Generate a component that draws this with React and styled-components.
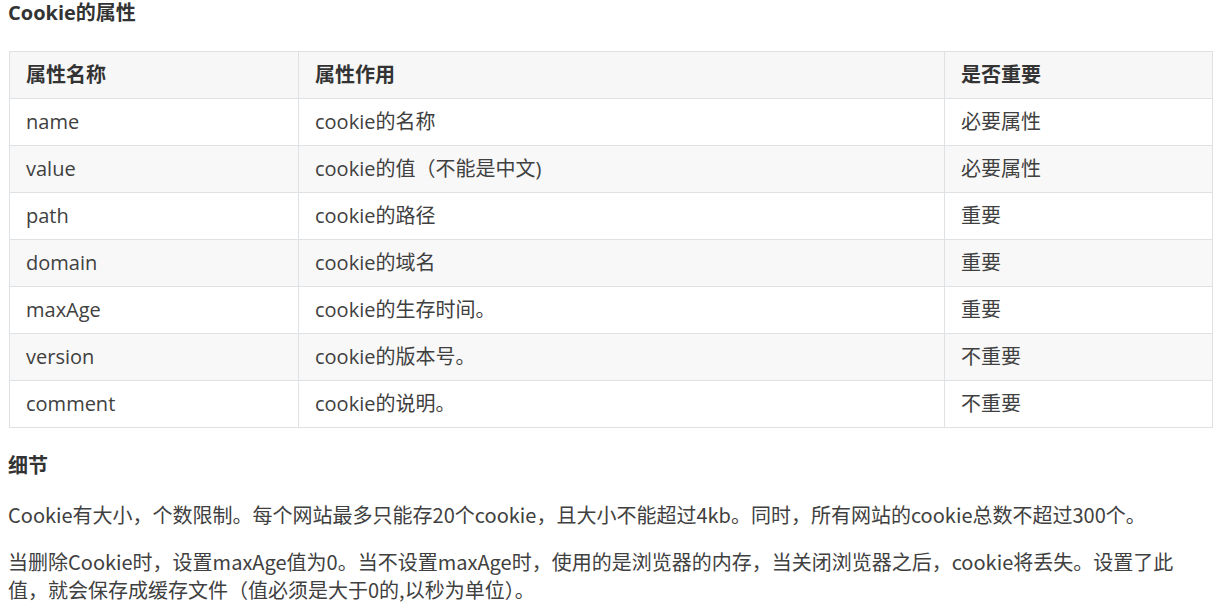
import styled, { createGlobalStyle } from "styled-components";

const GlobalStyle = createGlobalStyle`
  body {
    margin: 0;
    background: #fff;
    color: #333;
  }
`;

const rows = [
  ["name", "cookie的名称", "必要属性"],
  ["value", "cookie的值（不能是中文)", "必要属性"],
  ["path", "cookie的路径", "重要"],
  ["domain", "cookie的域名", "重要"],
  ["maxAge", "cookie的生存时间。", "重要"],
  ["version", "cookie的版本号。", "不重要"],
  ["comment", "cookie的说明。", "不重要"],
];

const App = () => {
  return (
    <Page>
      <GlobalStyle />
      <Heading>Cookie的属性</Heading>
      <Table>
        <colgroup>
          <col style={{ width: "289px" }} />
          <col style={{ width: "646px" }} />
          <col />
        </colgroup>
        <thead>
          <tr>
            <Th>属性名称</Th>
            <Th>属性作用</Th>
            <Th>是否重要</Th>
          </tr>
        </thead>
        <tbody>
          {rows.map((r, i) => (
            <Row key={r[0]} $striped={i % 2 === 1}>
              <Td>{r[0]}</Td>
              <Td>{r[1]}</Td>
              <Td>{r[2]}</Td>
            </Row>
          ))}
        </tbody>
      </Table>
      <Heading $top={25}>细节</Heading>
      <Para $top={22}>
        Cookie有大小，个数限制。每个网站最多只能存20个cookie，且大小不能超过4kb。同时，所有网站的cookie总数不超过300个。
      </Para>
      <Para $top={19}>
        当删除Cookie时，设置maxAge值为0。当不设置maxAge时，使用的是浏览器的内存，当关闭浏览器之后，cookie将丢失。设置了此值，就会保存成缓存文件（值必须是大于0的,以秒为单位）。
      </Para>
    </Page>
  );
};
export default App;

const Page = styled.div`
  width: 1205px;
  padding: 0 0 0 8px;
`;

const Heading = styled.h4`
  margin: ${(p) => p.$top || 0}px 0 0;
  font-family: "Open Sans", "Noto Sans CJK SC", sans-serif;
  font-size: 20px;
  line-height: 26px;
  font-weight: 700;
  color: #333;
`;

const Table = styled.table`
  margin: 25px 0 0 1px;
  width: 1204px;
  border-collapse: collapse;
  table-layout: fixed;
  font-family: "Open Sans", "Noto Sans CJK SC", sans-serif;
  font-size: 20px;
  line-height: 28px;
  color: #404040;
`;

const Th = styled.th`
  text-align: left;
  font-weight: 700;
  color: #333;
  padding: 9px 16px;
  background: #f7f7f7;
  border: 1px solid #dfe2e5;
`;

const Row = styled.tr`
  background: ${(p) => (p.$striped ? "#f8f8f8" : "#fff")};
`;

const Td = styled.td`
  padding: 9px 16px;
  border: 1px solid #dfe2e5;
`;

const Para = styled.p`
  margin: ${(p) => p.$top || 0}px 0 0;
  font-family: "Noto Sans CJK SC", sans-serif;
  font-size: 20px;
  line-height: 28px;
  color: #404040;
`;
